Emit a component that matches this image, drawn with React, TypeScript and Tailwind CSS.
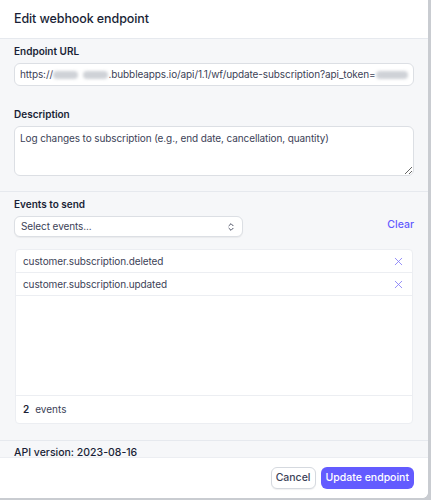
import { X, ChevronsUpDown } from "lucide-react";

const events = ["customer.subscription.deleted", "customer.subscription.updated"];

function Blur({ w }: { w: number }) {
  return <span className="inline-block h-[8px] align-middle bg-[#cfd2d7] blur-[1.5px] rounded-sm" style={{ width: w }} />;
}

export default function App() {
  return (
    <div className="w-[431px] h-[500px] bg-[#c9ccd1] font-['Inter',sans-serif] text-[#1a1f36] overflow-hidden">
      <div className="w-[428px] h-[498px] bg-white rounded-br-md flex flex-col overflow-hidden">
        <div className="h-[39px] px-[14px] flex items-center border-b border-[#e6e9ee] shrink-0">
          <h1 className="text-[12.5px] font-medium tracking-[-0.1px]">Edit webhook endpoint</h1>
        </div>

        <div className="flex-1 bg-[#f6f7f9] overflow-hidden">
          <div className="px-[14px] pt-[5px] pb-[15px]">
            <label className="block h-[14px] leading-[14px] text-[10px] font-semibold mb-[5px]">Endpoint URL</label>
            <div className="h-[23px] bg-white border border-[#dcdfe4] rounded-md px-[5px] flex items-center text-[10px] tracking-[-0.1px] text-[#3c4257] whitespace-nowrap overflow-hidden">
              https://<Blur w={26} /><span className="w-[5px] shrink-0" /><Blur w={27} />.bubbleapps.io/api/1.1/wf/update-subscription?api_token=<Blur w={34} />
            </div>

            <label className="block h-[14px] leading-[14px] text-[10px] font-semibold mt-[21px] mb-[5px]">Description</label>
            <textarea
              readOnly
              className="block w-full h-[50px] bg-white border border-[#dcdfe4] rounded-md px-[5px] py-[4px] text-[10px] tracking-[-0.1px] text-[#3c4257] resize-y outline-none"
              value="Log changes to subscription (e.g., end date, cancellation, quantity)"
            />
          </div>

          <div className="border-t border-[#e6e9ee] px-[14px] pt-[5px] pb-[16px]">
            <label className="block h-[14px] leading-[14px] text-[10px] font-semibold mb-[5px]">Events to send</label>
            <div className="flex items-center justify-between">
              <div className="w-[229px] h-[21px] bg-white border border-[#dcdfe4] rounded-md shadow-[0_1px_1px_rgba(0,0,0,0.05)] px-[6px] flex items-center justify-between text-[10px] tracking-[-0.1px] text-[#3c4257]">
                <span>Select events...</span>
                <ChevronsUpDown size={10} strokeWidth={2.2} className="text-[#3c4257]" />
              </div>
              <button className="text-[10.5px] font-medium text-[#635bff] mb-[4px]">Clear</button>
            </div>

            <div className="mt-[12px] mx-px h-[175px] bg-white border border-[#eceef2] rounded-sm flex flex-col">
              {events.map((e) => (
                <div key={e} className="h-[23px] px-[7px] flex items-center justify-between border-b border-[#eceef2] text-[10px] tracking-[-0.1px] text-[#3c4257]">
                  <span>{e}</span>
                  <X size={13} strokeWidth={1.5} className="text-[#7f78f6]" />
                </div>
              ))}
              <div className="flex-1" />
              <div className="h-[28px] px-[7px] flex items-center border-t border-[#eceef2] text-[10px] text-[#3c4257]">
                <span className="font-semibold text-[#1a1f36] mr-[6px]">2</span>events
              </div>
            </div>
          </div>

          <div className="border-t border-[#e6e9ee] px-[14px] pt-[5px]">
            <div className="h-[14px] leading-[14px] text-[10.5px] font-medium">API version: 2023-08-16</div>
          </div>
        </div>

        <div className="h-[41px] shrink-0 bg-white border-t border-[#eceef2] px-[14px] flex items-center justify-end gap-[5px]">
          <button className="h-[22px] px-[4px] bg-white border border-[#d5d9df] rounded-md shadow-[0_1px_1px_rgba(0,0,0,0.06)] text-[10.5px] font-medium text-[#3c4257]">
            Cancel
          </button>
          <button className="h-[22px] px-[5px] bg-[#635bff] rounded-md text-[10.5px] font-medium text-white">
            Update endpoint
          </button>
        </div>
      </div>
    </div>
  );
}
